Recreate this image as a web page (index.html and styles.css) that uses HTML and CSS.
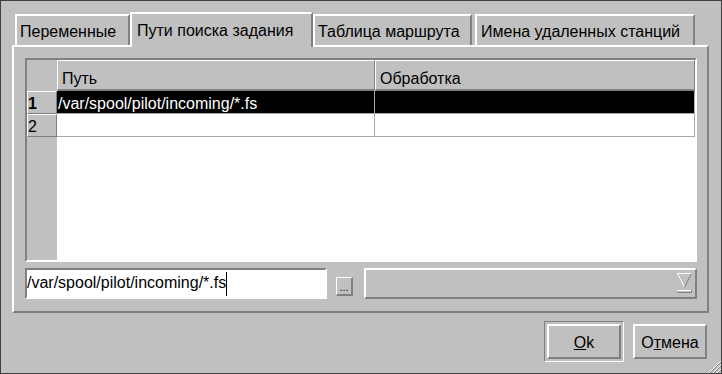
FILE: index.html
```html
<!DOCTYPE html>
<html>
<head>
    <title>Pilot</title>
    <link rel="stylesheet" href="styles.css">
</head>
<body>

<div class="window">
    <div class="tabbar">
        <div class="tab tab1">Переменные</div>
        <div class="tab active">Пути поиска задания</div>
        <div class="tab tab3">Таблица маршрута</div>
        <div class="tab tab4">Имена удаленных станций</div>
    </div>

    <div class="panel">
        <div class="table">
            <div class="head">
                <div class="corner"></div>
                <div class="hcell col1">Путь</div>
                <div class="hcell col2">Обработка</div>
            </div>
            <div class="tbody">
                <div class="rownums">
                    <div class="rnum current">1</div>
                    <div class="rnum">2</div>
                </div>
                <div class="rows">
                    <div class="row selected">
                        <div class="cell col1">/var/spool/pilot/incoming/*.fs</div>
                        <div class="cell col2"></div>
                    </div>
                    <div class="row">
                        <div class="cell col1"></div>
                        <div class="cell col2"></div>
                    </div>
                </div>
            </div>
        </div>

        <div class="controls">
            <div class="edit">/var/spool/pilot/incoming/*.fs<span class="caret"></span></div>
            <div class="dots">...</div>
            <div class="combo">
                <svg width="15" height="21" viewBox="0 0 15 21">
                    <line x1="0.5" y1="0.5" x2="14.5" y2="0.5" stroke="#ffffff"/>
                    <line x1="0.5" y1="0.5" x2="7.5" y2="14.5" stroke="#ffffff"/>
                    <line x1="14.5" y1="0.5" x2="7.5" y2="14.5" stroke="#808080"/>
                    <line x1="0" y1="17.5" x2="15" y2="17.5" stroke="#ffffff"/>
                    <line x1="0" y1="19.5" x2="15" y2="19.5" stroke="#808080"/>
                    <line x1="14.5" y1="17" x2="14.5" y2="20" stroke="#808080"/>
                </svg>
            </div>
        </div>
    </div>

    <div class="buttons">
        <div class="default">
            <button class="btn"><u>O</u>k</button>
        </div>
        <button class="btn">О<u>т</u>мена</button>
    </div>

    <svg class="grip" width="12" height="12" viewBox="0 0 12 12">
        <line x1="12" y1="0" x2="0" y2="12" stroke="#ffffff"/>
        <line x1="12" y1="1" x2="1" y2="12" stroke="#808080"/>
        <line x1="12" y1="4" x2="4" y2="12" stroke="#ffffff"/>
        <line x1="12" y1="5" x2="5" y2="12" stroke="#808080"/>
        <line x1="12" y1="8" x2="8" y2="12" stroke="#ffffff"/>
        <line x1="12" y1="9" x2="9" y2="12" stroke="#808080"/>
    </svg>
</div>

</body>
</html>
```

FILE: styles.css
```css
body {
    margin: 0;
    font-family: "Liberation Sans", Arial, sans-serif;
    font-size: 16px;
    color: #000;
    background-color: #c0c0c0;
}
.window {
    position: relative;
    width: 722px;
    height: 374px;
    box-sizing: border-box;
    border: 1px solid #404040;
    background-color: #c0c0c0;
}

/* tabs */
.tabbar {
    display: flex;
    align-items: flex-end;
    height: 44px;
    padding-left: 14px;
}
.tab {
    height: 31px;
    box-sizing: border-box;
    border-top: 2px solid #ffffff;
    border-left: 2px solid #ffffff;
    border-right: 2px solid #808080;
    padding: 7px 0 0 3px;
    line-height: 18px;
    white-space: nowrap;
}
.tab1 {
    width: 115px;
}
.tab.active {
    position: relative;
    z-index: 1;
    width: 183px;
    height: 35px;
    margin-bottom: -2px;
    padding: 8px 0 0 5px;
    background-color: #c0c0c0;
}
.tab3 {
    width: 159px;
}
.tab4 {
    width: 220px;
    margin-left: 3px;
    padding-left: 4px;
}

/* page */
.panel {
    margin-left: 11px;
    width: 697px;
    height: 268px;
    box-sizing: border-box;
    border: 2px solid;
    border-color: #ffffff #808080 #808080 #ffffff;
    padding: 11px 0 0 11px;
}

/* table */
.table {
    display: flex;
    flex-direction: column;
    width: 672px;
    height: 204px;
    box-sizing: border-box;
    border: 2px solid;
    border-color: #808080 #ffffff #ffffff #808080;
}
.head {
    display: flex;
    height: 31px;
}
.corner {
    width: 30px;
}
.hcell {
    box-sizing: border-box;
    border-top: 1px solid #ffffff;
    border-left: 1px solid #ffffff;
    border-bottom: 2px solid #808080;
    border-right: 1px solid #808080;
    padding: 9px 0 0 4px;
    line-height: 18px;
}
.col1 {
    width: 318px;
}
.col2 {
    width: 320px;
}
.tbody {
    display: flex;
    flex: 1;
}
.rownums {
    width: 30px;
}
.rnum {
    height: 23px;
    box-sizing: border-box;
    border: 1px solid;
    border-color: #ffffff #808080 #808080 #ffffff;
    padding-top: 3px;
    line-height: 18px;
}
.rnum.current {
    font-weight: bold;
}
.rows {
    flex: 1;
    background-color: #ffffff;
}
.row {
    display: flex;
    height: 23px;
    box-sizing: border-box;
    border-bottom: 1px solid #a8a8a8;
}
.cell {
    box-sizing: border-box;
    border-right: 1px solid #a8a8a8;
    padding: 4px 0 0 1px;
    line-height: 18px;
    white-space: nowrap;
}
.row.selected {
    background-color: #000;
    color: #fff;
}

/* edit line */
.controls {
    display: flex;
    margin-top: 6px;
}
.edit {
    display: flex;
    align-items: flex-start;
    width: 302px;
    height: 31px;
    box-sizing: border-box;
    border: 2px solid;
    border-color: #808080 #ffffff #ffffff #808080;
    background-color: #ffffff;
    padding-top: 4px;
    line-height: 18px;
    white-space: nowrap;
}
.caret {
    width: 1px;
    height: 24px;
    margin-top: -2px;
    background-color: #000;
}
.dots {
    display: flex;
    align-items: flex-end;
    justify-content: center;
    align-self: flex-end;
    width: 17px;
    height: 19px;
    box-sizing: border-box;
    margin: 0 0 3px 9px;
    border-style: solid;
    border-width: 1px 2px 2px 1px;
    border-color: #ffffff #808080 #808080 #ffffff;
    font-size: 11px;
    line-height: 13px;
}
.combo {
    display: flex;
    justify-content: flex-end;
    width: 333px;
    height: 31px;
    box-sizing: border-box;
    margin-left: 11px;
    border: 2px solid;
    border-color: #ffffff #808080 #808080 #ffffff;
    padding: 3px 3px 0 0;
}

/* dialog buttons */
.buttons {
    display: flex;
    justify-content: flex-end;
    align-items: center;
    gap: 9px;
    margin-top: 8px;
    padding-right: 14px;
}
.default {
    border: 1px solid;
    border-color: #808080 #ffffff #ffffff #808080;
    padding: 2px;
}
.btn {
    display: block;
    width: 74px;
    height: 35px;
    box-sizing: border-box;
    margin: 0;
    padding: 2px 0 0 0;
    border: 2px solid;
    border-color: #ffffff #808080 #808080 #ffffff;
    background-color: #c0c0c0;
    font-family: "Liberation Sans", Arial, sans-serif;
    font-size: 16px;
    color: #000;
}
.grip {
    position: absolute;
    right: 0;
    bottom: 0;
}
```
